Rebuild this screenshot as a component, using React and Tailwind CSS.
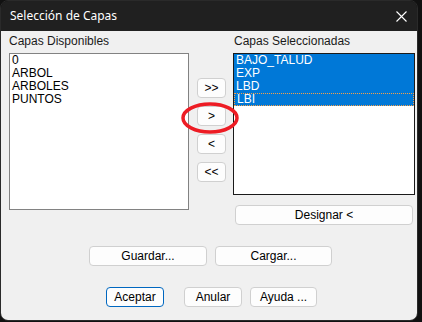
import React from 'react';

const font = { fontFamily: '"Liberation Sans", Arial, sans-serif' };

const Btn = ({ children, className = '', primary = false }) => (
  <div
    className={`flex items-center justify-center h-[20px] rounded-[4px] border bg-[#fdfdfd] text-[12px] leading-[14px] text-black ${
      primary ? 'border-[#0067c0]' : 'border-[#d0d0d0]'
    } ${className}`}
  >
    {children}
  </div>
);

const disponibles = ['0', 'ARBOL', 'ARBOLES', 'PUNTOS'];
const seleccionadas = ['BAJO_TALUD', 'EXP', 'LBD', 'LBI'];

export default function App() {
  return (
    <div className="w-[422px] h-[322px] bg-[#111111]" style={font}>
      <div className="w-[418px] h-[321px] rounded-[8px] overflow-hidden border border-[#2a2a2a] flex flex-col">
        {/* title bar */}
        <div className="h-[30px] bg-[#202020] flex items-center justify-between pl-[9px] pr-[9px] shrink-0">
          <span
            className="text-white text-[12px]"
            style={{ fontFamily: '"Noto Sans", "Open Sans", sans-serif' }}
          >
            Selección de Capas
          </span>
          <svg width="11" height="11" viewBox="0 0 11 11" className="mr-[1px]">
            <path d="M0.5 0.5 L10.5 10.5 M10.5 0.5 L0.5 10.5" stroke="#ffffff" strokeWidth="1.1" fill="none" />
          </svg>
        </div>

        {/* body */}
        <div className="relative flex-1 bg-[#f0f0f0] pl-[8px] pt-[3px]">
          <div className="flex items-start">
            {/* left column */}
            <div className="w-[180px]">
              <div className="h-[19px] text-[12px] leading-[15px] text-[#1a1a1a]">Capas Disponibles</div>
              <div className="h-[157px] border border-[#828282] bg-white overflow-hidden">
                {disponibles.map((d) => (
                  <div key={d} className="h-[13px] leading-[13px] text-[12px] pl-[2px] text-black">
                    {d}
                  </div>
                ))}
              </div>
            </div>

            {/* middle buttons */}
            <div className="w-[44px] pt-[44px] pl-[8px] flex flex-col gap-[8px]">
              <Btn className="w-[29px]">&gt;&gt;</Btn>
              <Btn className="w-[29px]">&gt;</Btn>
              <Btn className="w-[29px]">&lt;</Btn>
              <Btn className="w-[29px]">&lt;&lt;</Btn>
            </div>

            {/* right column */}
            <div className="w-[182px]">
              <div className="h-[19px] pl-[1px] text-[12px] leading-[15px] text-[#1a1a1a]">Capas Seleccionadas</div>
              <div className="h-[142px] border border-[#1a1a1a] bg-white overflow-hidden">
                {seleccionadas.map((s, i) => (
                  <div
                    key={s}
                    className={`h-[13px] text-[12px] pl-[2px] text-white bg-[#0078d7] ${
                      i === 3
                        ? 'border border-dotted border-[#f5a04a] pl-[1px] leading-[11px]'
                        : 'leading-[13px]'
                    }`}
                  >
                    {s}
                  </div>
                ))}
              </div>
              <Btn className="mt-[10px] ml-[2px] w-[178px]">Designar &lt;</Btn>
            </div>
          </div>

          {/* guardar / cargar */}
          <div className="flex gap-[8px] ml-[80px] mt-[21px]">
            <Btn className="w-[118px]">Guardar...</Btn>
            <Btn className="w-[117px]">Cargar...</Btn>
          </div>

          {/* bottom buttons */}
          <div className="flex ml-[97px] mt-[21px]">
            <Btn primary className="w-[58px]">Aceptar</Btn>
            <Btn className="w-[58px] ml-[20px]">Anular</Btn>
            <Btn className="w-[67px] ml-[8px]">Ayuda ...</Btn>
          </div>

          {/* red highlight ellipse */}
          <svg
            className="absolute left-[180px] top-[71px]"
            width="58"
            height="32"
            viewBox="0 0 58 32"
          >
            <ellipse cx="29" cy="16" rx="27" ry="14" fill="none" stroke="#ed1c24" strokeWidth="3.5" />
          </svg>
        </div>
      </div>
    </div>
  );
}
